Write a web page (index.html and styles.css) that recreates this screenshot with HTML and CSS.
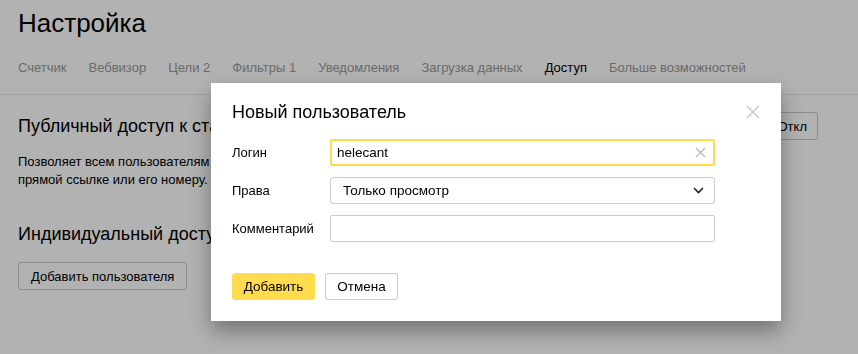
FILE: index.html
```html
<!DOCTYPE html>
<html lang="ru">
<head>
  <meta charset="UTF-8" />
  <meta name="viewport" content="width=device-width, initial-scale=1.0"/>
  <title>Настройка — Доступ</title>
  <link rel="stylesheet" href="styles.css">
</head>
<body>

  <div class="page">
    <h1>Настройка</h1>

    <nav class="tabs">
      <span class="tab">Счетчик</span>
      <span class="tab">Вебвизор</span>
      <span class="tab">Цели 2</span>
      <span class="tab">Фильтры 1</span>
      <span class="tab">Уведомления</span>
      <span class="tab">Загрузка данных</span>
      <span class="tab active">Доступ</span>
      <span class="tab">Больше возможностей</span>
    </nav>

    <section class="section">
      <div class="section-head">
        <h3>Публичный доступ к статистике</h3>
        <button class="btn">Откл</button>
      </div>
      <p class="hint">Позволяет всем пользователям Яндекса просматривать статистику счетчика по<br>прямой ссылке или его номеру.</p>
    </section>

    <section class="section">
      <h3>Индивидуальный доступ</h3>
      <button class="btn add-user">Добавить пользователя</button>
    </section>
  </div>

  <div class="overlay"></div>

  <!-- New user dialog -->
  <div class="modal">
    <svg class="modal-close" width="14" height="14" viewBox="0 0 14 14">
      <path d="M1 1L13 13M13 1L1 13" stroke="#ccc" stroke-width="1.6" fill="none"/>
    </svg>

    <h2>Новый пользователь</h2>

    <div class="form-row">
      <label for="login">Логин</label>
      <div class="field focused">
        <input id="login" type="text" value="helecant">
        <svg class="clear" width="11" height="11" viewBox="0 0 11 11">
          <path d="M1 1L10 10M10 1L1 10" stroke="#bbb" stroke-width="1.3" fill="none"/>
        </svg>
      </div>
    </div>

    <div class="form-row">
      <label>Права</label>
      <div class="field select">
        <span>Только просмотр</span>
        <svg width="11" height="7" viewBox="0 0 11 7">
          <path d="M1 1L5.5 5.5L10 1" stroke="#222" stroke-width="1.6" fill="none"/>
        </svg>
      </div>
    </div>

    <div class="form-row">
      <label for="comment">Комментарий</label>
      <div class="field">
        <input id="comment" type="text">
      </div>
    </div>

    <div class="actions">
      <button class="btn primary">Добавить</button>
      <button class="btn">Отмена</button>
    </div>
  </div>

</body>
</html>
```

FILE: styles.css
```css
body {
  margin: 0;
  font-family: 'Liberation Sans', Arial, sans-serif;
  color: #000;
  background: #fff;
  overflow: hidden;
}
.page {
  padding: 0 40px 0 18px;
}
h1 {
  margin: 0;
  padding-top: 10px;
  font-size: 26px;
  line-height: 26px;
  font-weight: normal;
}
.tabs {
  display: flex;
  gap: 22px;
  margin: 22px -40px 0 -18px;
  padding: 0 0 16px 18px;
  font-size: 13px;
  line-height: 20px;
  color: #999;
  border-bottom: 1px solid #e5e5e5;
}
.tab.active {
  color: #000;
}
.section h3 {
  margin: 0;
  font-size: 18px;
  line-height: 24px;
  font-weight: normal;
}
.section-head {
  display: flex;
  justify-content: space-between;
  align-items: center;
  margin-top: 17px;
}
.hint {
  margin: 13px 0 0;
  font-size: 13px;
  line-height: 18px;
}
.section + .section {
  margin-top: 33px;
}
.btn {
  font-family: inherit;
  font-size: 13px;
  height: 28px;
  padding: 0 10px;
  background: #fff;
  border: 1px solid rgba(0, 0, 0, 0.2);
  border-radius: 3px;
  color: #000;
  white-space: nowrap;
}
.add-user {
  display: block;
  margin-top: 16px;
  padding: 0 12px;
}
.overlay {
  position: fixed;
  inset: 0;
  background: rgba(0, 0, 0, 0.3);
}
.modal {
  position: absolute;
  left: 211px;
  top: 83px;
  width: 528px;
  padding: 17px 21px 21px;
  background: #fff;
  box-shadow: 0 10px 20px rgba(0, 0, 0, 0.35);
}
.modal-close {
  position: absolute;
  right: 21px;
  top: 22px;
}
.modal h2 {
  margin: 0 0 15px;
  font-size: 18px;
  line-height: 24px;
  font-weight: normal;
}
.form-row {
  display: flex;
  align-items: center;
  margin-bottom: 11px;
  font-size: 13px;
}
.form-row label {
  width: 98px;
}
.field {
  position: relative;
  box-sizing: border-box;
  width: 385px;
  height: 27px;
  border: 1px solid rgba(0, 0, 0, 0.2);
  border-radius: 2px;
  display: flex;
  align-items: center;
}
.field input {
  border: none;
  outline: none;
  width: 100%;
  font-family: inherit;
  font-size: 13.5px;
  padding: 0 8px;
  background: transparent;
}
.field.focused {
  border: 2px solid #ffdb4d;
}
.field.focused input {
  padding-left: 5px;
}
.clear {
  margin-right: 7px;
  flex-shrink: 0;
}
.select {
  justify-content: space-between;
  padding: 0 10px 0 12px;
  font-size: 13.5px;
  border-radius: 3px;
}
.actions {
  display: flex;
  gap: 10px;
  margin-top: 31px;
}
.actions .btn {
  height: 27px;
  font-size: 13.5px;
}
.btn.primary {
  width: 83px;
  background: #ffdb4d;
  border-color: #ffdb4d;
}
.actions .btn:last-child {
  width: 73px;
}
```
